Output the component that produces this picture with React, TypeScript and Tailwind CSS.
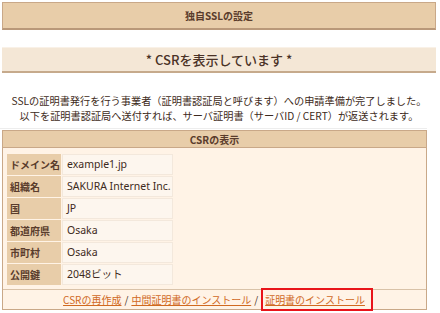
import React from "react";

const rows = [
  { label: "ドメイン名", value: "example1.jp" },
  { label: "組織名", value: "SAKURA Internet Inc." },
  { label: "国", value: "JP" },
  { label: "都道府県", value: "Osaka" },
  { label: "市町村", value: "Osaka" },
  { label: "公開鍵", value: "2048ビット" },
];

export default function App() {
  return (
    <div className="w-[440px] h-[313px] overflow-hidden bg-white text-[#4a3226] font-['Noto_Sans_CJK_JP','Noto_Sans',sans-serif]">
      <div className="pt-[2px] pl-[2px] pr-[4px]">
        {/* Title bar */}
        <div className="h-[28px] flex items-center justify-center bg-[#e8cda9] border border-[#c9a888] border-b-2 border-b-[#b99879] text-[10px] font-bold text-[#5a3c2c]">
          独自SSLの設定
        </div>

        {/* Status bar */}
        <div className="mt-[17px] h-[26px] flex items-center justify-center bg-[#f4e7d6] border-t border-t-[#f9f1e7] border-b-2 border-b-[#c6aa8c] text-[13px] font-medium text-[#4a3226]">
          * CSRを表示しています *
        </div>

        <div className="mt-[20px] text-center text-[10.2px] leading-[15px] text-[#3d2a20]">
          <div>SSLの証明書発行を行う事業者（証明書認証局と呼びます）への申請準備が完了しました。</div>
          <div>以下を証明書認証局へ送付すれば、サーバ証明書（サーバID / CERT）が返送されます。</div>
        </div>
      </div>

      <div className="mt-[5px] w-[427px] h-px bg-[#ededed]" />

      {/* CSR panel */}
      <div className="mt-[1px] ml-[2px] w-[425px] border border-[#c9a888] bg-[#fff3e6]">
        <div className="h-[17px] flex items-center justify-center bg-[#e8cda9] border-b border-[#c9a888] text-[10px] font-bold text-[#5a3c2c]">
          CSRの表示
        </div>

        <div className="pt-[6px] pb-[4px] pl-[4px]">
          <div className="grid grid-cols-[54px_111px] gap-[1px]">
            {rows.map((r) => (
              <React.Fragment key={r.label}>
                <div className="h-[21px] flex items-center pl-[3px] bg-[#e8cda9] text-[10px] font-bold text-[#5a3c2c] whitespace-nowrap">
                  {r.label}
                </div>
                <div className="h-[21px] flex items-center pl-[4px] bg-[#fdf6ee] border border-[#f3e8dc] text-[10.5px] text-[#3d2a20] whitespace-nowrap font-['Noto_Sans','Noto_Sans_CJK_JP',sans-serif]">
                  {r.value}
                </div>
              </React.Fragment>
            ))}
          </div>
        </div>

        <div className="h-[20px] border-t border-[#d9c2a8] flex items-center justify-center pl-[7px] text-[10px]">
          <a href="#" className="text-[#d0691f] underline">CSRの再作成</a>
          <span className="mx-[3px] text-[#4a3226]">/</span>
          <a href="#" className="text-[#d0691f] underline">中間証明書のインストール</a>
          <span className="mx-[3px] text-[#4a3226]">/</span>
          <span className="h-[23px] flex items-center border-2 border-[#e8141a] pl-[2px] pr-[6px]">
            <a href="#" className="text-[#d0691f] underline">証明書のインストール</a>
          </span>
        </div>
      </div>
    </div>
  );
}
